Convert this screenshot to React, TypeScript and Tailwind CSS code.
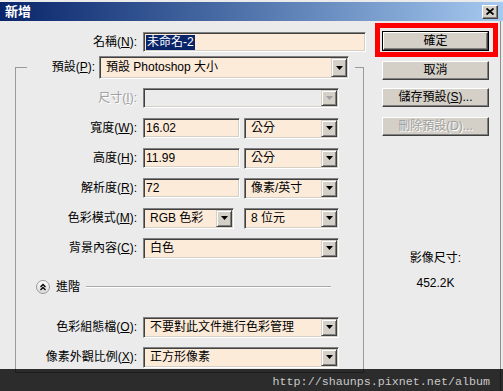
import type { ReactNode } from 'react';

const font = "font-['Liberation_Sans','Noto_Sans_CJK_TC',sans-serif]";
const sunken =
  'flex items-stretch border border-t-[#808080] border-l-[#808080] border-r-white border-b-white shadow-[inset_1px_1px_0_#404040,inset_-1px_-1px_0_#d4d0c8] p-[1px]';
const raised =
  'bg-[#d4d0c8] border border-t-white border-l-white border-r-[#404040] border-b-[#404040] shadow-[inset_-1px_-1px_0_#808080]';

function Arrow({ disabled }: { disabled?: boolean }) {
  return (
    <div className="w-[16px] flex items-center justify-center bg-[#d4d0c8] border border-t-[#d4d0c8] border-l-[#d4d0c8] border-r-[#404040] border-b-[#404040] shadow-[inset_1px_1px_0_#fff,inset_-1px_-1px_0_#808080]">
      <svg width="7" height="4" viewBox="0 0 7 4">
        <path d="M0 0h7L3.5 4z" fill={disabled ? '#a0a0a0' : '#000'} />
      </svg>
    </div>
  );
}

function Select({ w, h = 'h-[21px]', children, disabled }: { w: string; h?: string; children?: ReactNode; disabled?: boolean }) {
  return (
    <div className={`${sunken} ${w} ${h} ${disabled ? 'bg-[#ebebeb]' : 'bg-[#fdebd9]'}`}>
      <div className="flex-1 flex items-center pl-[5px] whitespace-nowrap overflow-hidden">{children}</div>
      <Arrow disabled={disabled} />
    </div>
  );
}

function Input({ w, children }: { w: string; children: ReactNode }) {
  return (
    <div className={`${sunken} ${w} h-[20px] bg-[#fdebd9]`}>
      <div className="flex items-center pl-[1px]">{children}</div>
    </div>
  );
}

function Label({ children, disabled }: { children: ReactNode; disabled?: boolean }) {
  return (
    <div className={`w-[121px] text-right whitespace-nowrap ${disabled ? 'text-[#a0a0a0] [text-shadow:1px_1px_0_#fff]' : ''}`}>
      {children}
    </div>
  );
}

function Row({ label, disabled, children }: { label: ReactNode; disabled?: boolean; children: ReactNode }) {
  return (
    <div className="h-[30px] flex items-center">
      <Label disabled={disabled}>{label}</Label>
      <div className="ml-[6px] flex items-center">{children}</div>
    </div>
  );
}

function Button({ children, disabled, isDefault }: { children: ReactNode; disabled?: boolean; isDefault?: boolean }) {
  const inner = (
    <div
      className={`${raised} w-full h-full flex items-center justify-center ${
        disabled ? 'text-[#a0a0a0] [text-shadow:1px_1px_0_#fff]' : 'text-black'
      }`}
    >
      {children}
    </div>
  );
  if (isDefault) {
    return <div className="w-[107px] h-[20px] border border-black">{inner}</div>;
  }
  return <div className="w-[107px] h-[19px] ml-[7px]">{inner}</div>;
}

export default function App() {
  return (
    <div className={`relative w-[503px] h-[391px] overflow-hidden bg-[#ebebeb] pt-[2px] text-[12px] leading-[15px] text-black ${font}`}>
      <div className="h-[19px] flex items-center bg-linear-to-r from-[#0a246a] to-[#a6caf0]">
        <span className="pl-[5px] text-white font-bold text-[13px]">新增</span>
        <div className={`${raised} ml-auto mr-[5px] w-[16px] h-[14px] flex items-center justify-center`}>
          <svg width="8" height="7" viewBox="0 0 8 7">
            <path d="M0.5 0.5L7.5 6.5M7.5 0.5L0.5 6.5" stroke="#000" strokeWidth="1.8" />
          </svg>
        </div>
      </div>

      <div className="flex w-[501px] h-[370px] border-r border-[#8f8f8f]">
        <div className="w-[375px] pt-[11px]">
          <div className="h-[20px] flex items-center">
            <div className="w-[137px] text-right">
              名稱(<u>N</u>):
            </div>
            <div className="ml-[6px]">
              <Input w="w-[223px]">
                <span className="bg-[#0a246a] text-white px-[1px]">未命名-2</span>
              </Input>
            </div>
          </div>

          <fieldset className="mt-[4px] ml-[15px] w-[349px] border border-[#9a9a9a] p-0 m-0">
            <legend className="ml-[11px] p-0">
              <div className="flex items-center pr-[6px]">
                <div className="w-[68px] text-right">
                  預設(<u>P</u>):
                </div>
                <div className="ml-[4px]">
                  <Select w="w-[250px]" h="h-[23px]">
                    預設 Photoshop 大小
                  </Select>
                </div>
              </div>
            </legend>

            <div className="pt-[4px]">
              <Row disabled label={<>尺寸(<u>I</u>):</>}>
                <Select w="w-[196px]" h="h-[20px]" disabled />
              </Row>
              <Row label={<>寬度(<u>W</u>):</>}>
                <Input w="w-[97px]">16.02</Input>
                <div className="ml-[4px]">
                  <Select w="w-[95px]">公分</Select>
                </div>
              </Row>
              <Row label={<>高度(<u>H</u>):</>}>
                <Input w="w-[97px]">11.99</Input>
                <div className="ml-[4px]">
                  <Select w="w-[95px]">公分</Select>
                </div>
              </Row>
              <Row label={<>解析度(<u>R</u>):</>}>
                <Input w="w-[97px]">72</Input>
                <div className="ml-[4px]">
                  <Select w="w-[95px]">像素/英寸</Select>
                </div>
              </Row>
              <Row label={<>色彩模式(<u>M</u>):</>}>
                <Select w="w-[91px]">RGB 色彩</Select>
                <div className="ml-[10px]">
                  <Select w="w-[95px]">8 位元</Select>
                </div>
              </Row>
              <Row label={<>背景內容(<u>C</u>):</>}>
                <Select w="w-[196px]">白色</Select>
              </Row>

              <div className="mt-[9px] h-[30px] flex items-center pl-[20px] pr-[32px]">
                <svg width="14" height="14" viewBox="0 0 14 14">
                  <defs>
                    <linearGradient id="cg" x1="0" y1="0" x2="0" y2="1">
                      <stop offset="0" stopColor="#ffffff" />
                      <stop offset="1" stopColor="#d8d8d8" />
                    </linearGradient>
                  </defs>
                  <circle cx="7" cy="7" r="6.5" fill="url(#cg)" stroke="#9a9a9a" />
                  <path d="M4.5 7L7 4.5L9.5 7M4.5 10L7 7.5L9.5 10" fill="none" stroke="#000" strokeWidth="1.3" />
                </svg>
                <span className="ml-[6px]">進階</span>
                <div className="ml-[6px] flex-1 h-[2px] border-t border-[#a8a8a8] border-b border-b-white" />
              </div>

              <div className="mt-[10px]">
                <Row label={<>色彩組態檔(<u>O</u>):</>}>
                  <Select w="w-[196px]">不要對此文件進行色彩管理</Select>
                </Row>
                <Row label={<>像素外觀比例(<u>X</u>):</>}>
                  <Select w="w-[196px]">正方形像素</Select>
                </Row>
              </div>
            </div>
          </fieldset>
        </div>

        <div className="flex flex-col">
          <div className="mt-[2px] w-[123px] h-[34px] border-[5px] border-[#ff0000] pt-[3px] pl-[2px]">
            <Button isDefault>確定</Button>
          </div>
          <div className="mt-[4px]">
            <Button>取消</Button>
          </div>
          <div className="mt-[8px]">
            <Button>
              儲存預設(<u>S</u>)...
            </Button>
          </div>
          <div className="mt-[10px]">
            <Button disabled>刪除預設(D)...</Button>
          </div>
          <div className="ml-[7px] w-[107px] text-center mt-[115px]">影像尺寸:</div>
          <div className="ml-[7px] w-[107px] text-center mt-[10px]">452.2K</div>
        </div>
      </div>

      <div className="absolute left-0 right-0 bottom-0 h-[22px] bg-black/[0.81] flex items-center justify-end pr-[13px] pt-[6px]">
        <span className="font-['Liberation_Mono',monospace] text-[11.7px] text-[#c8c8c8] leading-none">
          http://shaunps.pixnet.net/album
        </span>
      </div>
    </div>
  );
}
